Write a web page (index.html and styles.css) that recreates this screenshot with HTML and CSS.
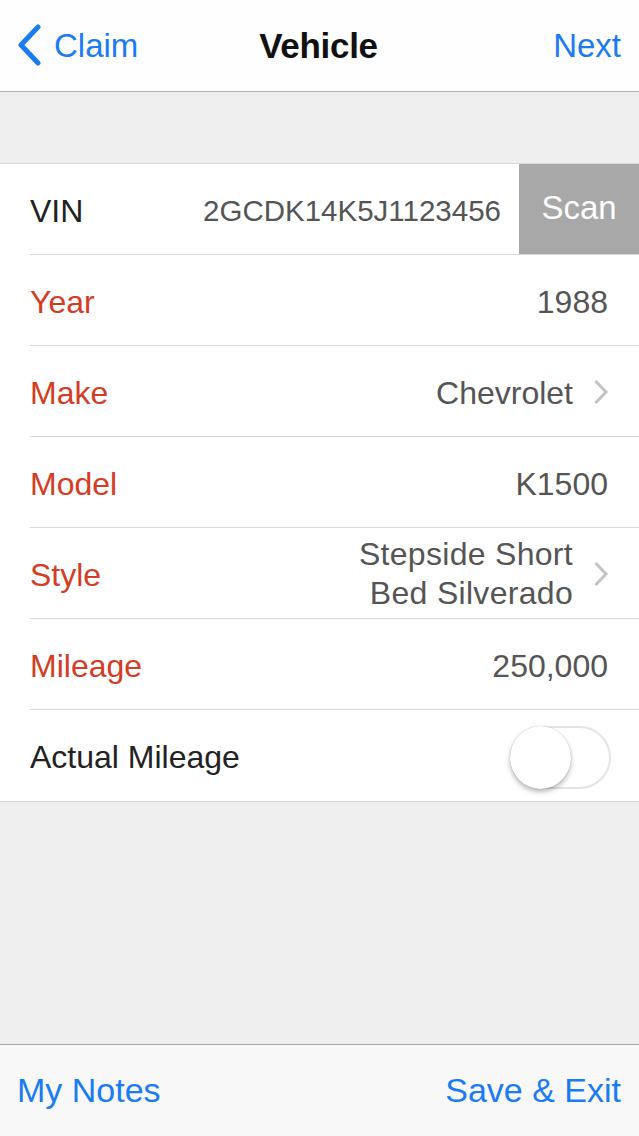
FILE: index.html
```html
<!DOCTYPE html>
<html>
<head>
<meta charset="utf-8">
<link rel="stylesheet" href="styles.css">
</head>
<body>
<div class="screen">
  <header class="nav">
    <a class="nav-back">
      <svg class="back-chevron" width="26" height="42" viewBox="0 0 26 42"><path d="M22 3 L5 21 L22 39" fill="none" stroke="#1a7bf2" stroke-width="5" stroke-linecap="round" stroke-linejoin="round"/></svg>
      <span>Claim</span>
    </a>
    <h1 class="nav-title">Vehicle</h1>
    <a class="nav-next">Next</a>
  </header>

  <main class="content">
    <section class="table">
      <div class="row">
        <div class="row-body">
          <span class="label">VIN</span>
          <span class="value vin">2GCDK14K5J1123456</span>
          <button class="scan">Scan</button>
        </div>
      </div>
      <div class="row">
        <div class="row-body">
          <span class="label req">Year</span>
          <span class="value">1988</span>
        </div>
      </div>
      <div class="row">
        <div class="row-body link">
          <span class="label req">Make</span>
          <span class="value">Chevrolet</span>
          <svg class="chev" width="16" height="26" viewBox="0 0 16 26"><path d="M2.5 2 L13 13 L2.5 24" fill="none" stroke="#c4c4c8" stroke-width="3"/></svg>
        </div>
      </div>
      <div class="row">
        <div class="row-body">
          <span class="label req">Model</span>
          <span class="value">K1500</span>
        </div>
      </div>
      <div class="row">
        <div class="row-body link">
          <span class="label req">Style</span>
          <span class="value multi">Stepside Short<br>Bed Silverado</span>
          <svg class="chev" width="16" height="26" viewBox="0 0 16 26"><path d="M2.5 2 L13 13 L2.5 24" fill="none" stroke="#c4c4c8" stroke-width="3"/></svg>
        </div>
      </div>
      <div class="row">
        <div class="row-body">
          <span class="label req">Mileage</span>
          <span class="value">250,000</span>
        </div>
      </div>
      <div class="row last">
        <div class="row-body">
          <span class="label">Actual Mileage</span>
          <span class="toggle"><span class="knob"></span></span>
        </div>
      </div>
    </section>
  </main>

  <footer class="toolbar">
    <a class="tool-btn">My Notes</a>
    <a class="tool-btn">Save &amp; Exit</a>
  </footer>
</div>
</body>
</html>
```

FILE: styles.css
```css
* { box-sizing: border-box; }
html, body { margin: 0; padding: 0; }
body {
  background: #efefef;
  font-family: "Liberation Sans", Arial, sans-serif;
}
.screen {
  width: 639px;
  height: 1136px;
  display: flex;
  flex-direction: column;
  background: #efefef;
}
.nav {
  height: 92px;
  flex: none;
  background: #fefefe;
  border-bottom: 1px solid #b3b3b3;
  display: grid;
  grid-template-columns: 1fr auto 1fr;
  align-items: center;
  padding: 0 18px 0 16px;
}
.nav-back {
  display: flex;
  align-items: center;
  gap: 12px;
  color: #1a7bf2;
  font-size: 33px;
  justify-self: start;
}
.back-chevron { display: block; margin-top: -1px; }
.nav-title {
  margin: 0;
  font-size: 35px;
  font-weight: bold;
  color: #111;
  letter-spacing: -0.3px;
}
.nav-next {
  justify-self: end;
  color: #1a7bf2;
  font-size: 33px;
}
.content {
  flex: 1;
  padding-top: 71px;
}
.table {
  background: #fff;
  border-top: 1px solid #d9d9d9;
  border-bottom: 1px solid #d6d6d6;
}
.row {
  padding-left: 30px;
}
.row-body {
  height: 91px;
  border-bottom: 1px solid #d9d9d9;
  display: flex;
  align-items: center;
  padding-right: 31px;
}
.row.last .row-body { border-bottom: none; padding-right: 28px; }
.label {
  font-size: 32px;
  color: #222;
  flex: 1;
  padding-top: 4px;
}
.label.req { color: #d43c24; }
.value {
  font-size: 32px;
  color: #555;
  text-align: right;
  padding-top: 4px;
}
.value.vin {
  font-size: 29.5px;
  margin-right: 18px;
}
.value.multi {
  line-height: 39px;
  padding-top: 2px;
  letter-spacing: 0.3px;
}
.row-body.link { padding-right: 30px; }
.chev { margin-left: 20px; display: block; flex: none; margin-top: 2px; }
.scan {
  align-self: stretch;
  width: 120px;
  margin-right: -31px;
  border: none;
  background: #a8a8a8;
  color: #fff;
  font-family: "Liberation Sans", Arial, sans-serif;
  font-size: 33px;
  padding: 0 0 2px 0;
}
.toggle {
  width: 101px;
  height: 63px;
  border-radius: 32px;
  border: 2px solid #e4e4e4;
  background: #fff;
  position: relative;
  margin-top: 3px;
}
.knob {
  position: absolute;
  left: -2px;
  top: -2px;
  width: 61px;
  height: 63px;
  border-radius: 50%;
  background: #fff;
  box-shadow: 0 3px 5px rgba(0,0,0,0.28), 0 0 1px rgba(0,0,0,0.25);
}
.toolbar {
  flex: none;
  height: 92px;
  background: #f8f8f8;
  border-top: 1px solid #a9a9a9;
  display: flex;
  justify-content: space-between;
  align-items: center;
  padding: 0 18px 0 17px;
}
.tool-btn {
  color: #1a7bf2;
  font-size: 34px;
}
```
